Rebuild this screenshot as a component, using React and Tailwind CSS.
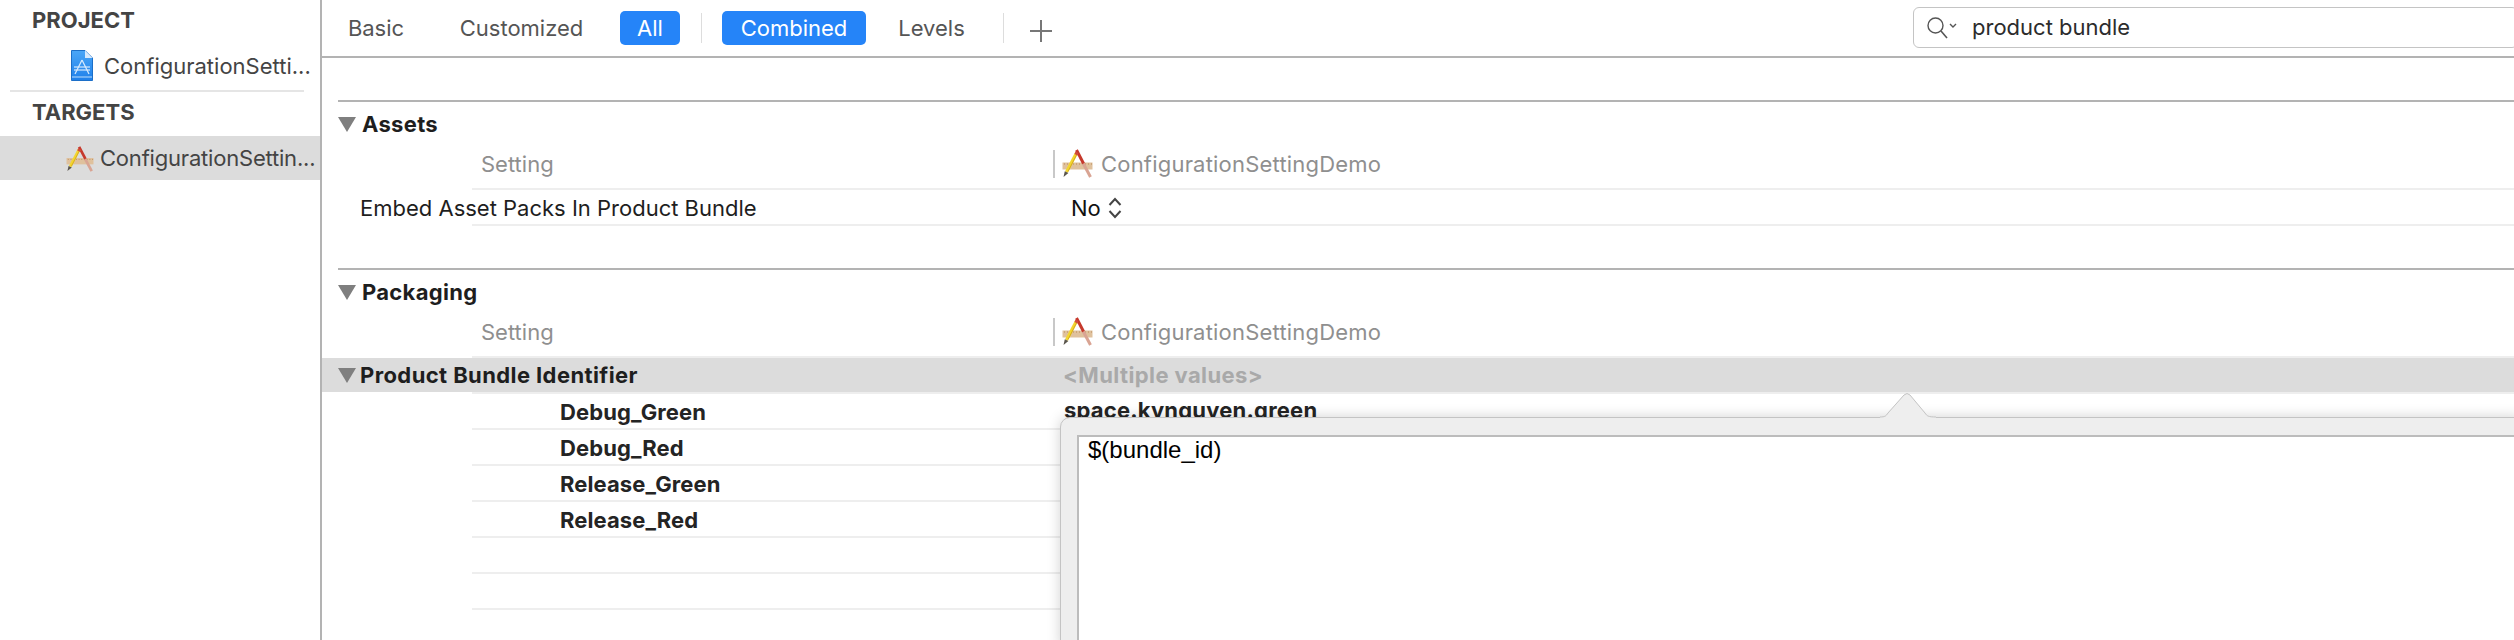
import React from "react";

function Hammer({ className }) {
  return (
    <svg viewBox="0 0 31 30" className={className}>
      <rect x="0.5" y="14.5" width="30" height="7" fill="#dfc19d" />
      <path d="M2 16h28" stroke="#b98a58" strokeWidth="1" strokeDasharray="1 2" />
      <path d="M21 15 L28.5 29" stroke="#d9a493" strokeWidth="3" />
      <path d="M14.5 2 L21.5 15.5" stroke="#c6392c" strokeWidth="3" />
      <path d="M14.5 5 L4.5 24" stroke="#f3d62f" strokeWidth="3.2" />
      <path d="M15 6 L6 23.5" stroke="#cf9f1a" strokeWidth="0.8" />
      <path d="M2.8 23.2 L6.4 25 L1.5 29 Z" fill="#5a554c" />
      <path d="M13.5 3.5 L16.5 5 L15.5 7.5 L12.5 6 Z" fill="#d04a3a" />
    </svg>
  );
}

function ProjectFile() {
  return (
    <svg viewBox="0 0 22 31" className="w-[22px] h-[31px] shrink-0">
      <defs>
        <linearGradient id="pf" x1="0" y1="0" x2="0" y2="1">
          <stop offset="0" stopColor="#4aa6f7" />
          <stop offset="1" stopColor="#1f80ea" />
        </linearGradient>
      </defs>
      <path d="M0.5 0.5 H14 L21.5 8 V30.5 H0.5 Z" fill="url(#pf)" stroke="#1c6fc8" />
      <path d="M14 0.5 V8 H21.5 Z" fill="#d7e9fc" />
      <path d="M1 27 H21" stroke="#bcdcfb" strokeWidth="1" />
      <g stroke="#d5e9fd" strokeWidth="1.2" fill="none">
        <path d="M11 10 L4 24" />
        <path d="M11 10 L18 24" />
        <path d="M3 17 H19" />
        <path d="M3 20 H19" />
      </g>
    </svg>
  );
}

function Triangle() {
  return (
    <svg viewBox="0 0 18 15" className="w-[18px] h-[15px] shrink-0">
      <path d="M0 0 H18 L9 15 Z" fill="#7f7f7f" />
    </svg>
  );
}

function Divider() {
  return <div className="ml-[150px] h-[2px] bg-[#eeeeee]" />;
}

function SettingHead() {
  return (
    <>
      <div className="h-[42px] pb-[6px] flex items-center">
        <span className="ml-[159px] w-[572px] text-[22px] text-[#8f8f8f]">Setting</span>
        <span className="w-[2px] h-[28px] bg-[#c8c8c8]" />
        <Hammer className="w-[31px] h-[30px] ml-[7px] -mt-[2px]" />
        <span className="ml-[8px] text-[22px] tracking-[0.2px] text-[#8f8f8f]">ConfigurationSettingDemo</span>
      </div>
      <Divider />
    </>
  );
}

function SectionTitle({ children }) {
  return (
    <div className="ml-[16px] border-t-2 border-[#b3b3b3] h-[46px] flex items-center">
      <Triangle />
      <span className="ml-[6px] text-[22px] font-bold tracking-[0.3px] text-[#1e1e1e]">{children}</span>
    </div>
  );
}

function ConfigRow({ label, value }) {
  return (
    <>
      <div className="h-[34px] flex items-center pt-[2px]">
        <span className="ml-[238px] w-[504px] text-[22px] font-bold tracking-[0.1px] text-[#242424]">{label}</span>
        {value && <span className="-mt-[3px] text-[22px] font-bold tracking-[0.2px] text-[#242424] whitespace-nowrap">{value}</span>}
      </div>
      <Divider />
    </>
  );
}

function Tab({ children, active, className = "" }) {
  return (
    <span
      className={
        "h-[34px] flex items-center justify-center rounded-[5px] text-[22px] " +
        (active ? "bg-[#2584f8] text-white " : "text-[#555555] ") +
        className
      }
    >
      {children}
    </span>
  );
}

export default function App() {
  return (
    <div className="w-[2514px] h-[640px] flex overflow-hidden bg-white font-['Inter',sans-serif]">
      <aside className="w-[322px] h-full shrink-0 border-r-2 border-[#b3b3b3]">
        <div className="h-[40px] flex items-center pl-[32px] text-[22px] font-bold text-[#444444]">PROJECT</div>
        <div className="h-[50px] flex items-center pl-[71px]">
          <ProjectFile />
          <span className="ml-[11px] text-[22px] text-[#444444] whitespace-nowrap pt-[2px]">ConfigurationSetti...</span>
        </div>
        <div className="mx-[10px] w-[294px] h-[2px] bg-[#e5e5e5]" />
        <div className="h-[44px] pb-[4px] flex items-center pl-[32px] text-[22px] font-bold text-[#444444]">TARGETS</div>
        <div className="h-[44px] bg-[#dcdcdc] flex items-center pl-[66px]">
          <Hammer className="w-[28px] h-[27px] shrink-0" />
          <span className="ml-[6px] text-[22px] tracking-[-0.2px] text-[#444444] whitespace-nowrap">ConfigurationSettin...</span>
        </div>
      </aside>

      <main className="relative flex-1 min-w-0 h-full overflow-hidden">
        <div className="h-[58px] border-b-2 border-[#b3b3b3] flex items-center">
          <Tab className="ml-[26px] w-[56px]">Basic</Tab>
          <Tab className="ml-[56px] w-[123px]">Customized</Tab>
          <Tab active className="ml-[37px] w-[60px]">All</Tab>
          <span className="ml-[21px] w-[1px] h-[30px] bg-[#dddddd]" />
          <Tab active className="ml-[20px] w-[144px]">Combined</Tab>
          <Tab className="ml-[32px] w-[67px]">Levels</Tab>
          <span className="ml-[38px] w-[1px] h-[30px] bg-[#dddddd]" />
          <svg viewBox="0 0 24 24" className="w-[24px] h-[24px] ml-[25px] mt-[6px]">
            <path d="M12 1 V23 M1 12 H23" stroke="#777777" strokeWidth="2" />
          </svg>
          <div className="ml-[860px] flex-1 h-[41px] -mr-[4px] -mt-[1px] rounded-[6px] border border-[#c4c4c4] flex items-center">
            <svg viewBox="0 0 32 24" className="w-[32px] h-[24px] ml-[12px] shrink-0">
              <circle cx="9.5" cy="9.5" r="7.5" fill="none" stroke="#555555" strokeWidth="1.4" />
              <path d="M15 15 L21 22" stroke="#555555" strokeWidth="1.6" />
              <path d="M24 8 L27 11 L30 8" fill="none" stroke="#555555" strokeWidth="1.4" />
            </svg>
            <span className="ml-[14px] text-[22px] text-[#2c2c2c]">product bundle</span>
          </div>
        </div>

        <div className="pt-[42px]">
          <SectionTitle>Assets</SectionTitle>
          <SettingHead />
          <div className="h-[34px] flex items-center pt-[2px]">
            <span className="ml-[38px] w-[711px] text-[22px] text-[#1e1e1e]">Embed Asset Packs In Product Bundle</span>
            <span className="text-[22px] text-[#111111]">No</span>
            <svg viewBox="0 0 14 22" className="w-[14px] h-[22px] ml-[7px]">
              <path d="M1.5 8 L7 2 L12.5 8 M1.5 14 L7 20 L12.5 14" fill="none" stroke="#444444" strokeWidth="2" />
            </svg>
          </div>
          <Divider />
        </div>

        <div className="pt-[42px]">
          <SectionTitle>Packaging</SectionTitle>
          <SettingHead />
          <div className="h-[34px] bg-[#dcdcdc] flex items-center pl-[16px]">
            <Triangle />
            <span className="ml-[4px] w-[703px] text-[22px] font-bold tracking-[0.4px] text-[#1e1e1e] pt-[1px]">Product Bundle Identifier</span>
            <span className="text-[22px] font-bold tracking-[0.4px] text-[#a9a9a9] whitespace-nowrap pt-[1px]">&lt;Multiple values&gt;</span>
          </div>
          <Divider />
          <ConfigRow label="Debug_Green" value="space.kynguyen.green" />
          <ConfigRow label="Debug_Red" />
          <ConfigRow label="Release_Green" />
          <ConfigRow label="Release_Red" />
          <ConfigRow label="" />
          <ConfigRow label="" />
        </div>

        {/* Edit popover lying over the table */}
        <div className="absolute left-[738px] top-[417px] -right-[8px] -bottom-[8px] rounded-tl-[10px] border border-[#c4c4c4] bg-[#eeeeee] pl-[16px] pt-[17px] shadow-[0_0_14px_rgba(0,0,0,0.18)]">
          <div className="h-full bg-white border-2 border-[#bcbcbc] pl-[9px] font-['Liberation_Sans',sans-serif] text-[24px] leading-[26px] text-black">
            $(bundle_id)
          </div>
        </div>
        <svg viewBox="0 0 56 26" className="absolute left-[1558px] top-[392px] w-[56px] h-[26px]">
          <path d="M0 25 C5 25 6 24 8 21 L24 3 Q27 0 30 3 L45 21 C47 24 48 25 56 25 V26 H0 Z" fill="#eeeeee" />
          <path d="M0 25 C5 25 6 24 8 21 L24 3 Q27 0 30 3 L45 21 C47 24 48 25 56 25" fill="none" stroke="#c4c4c4" strokeWidth="1" />
        </svg>
      </main>
    </div>
  );
}
